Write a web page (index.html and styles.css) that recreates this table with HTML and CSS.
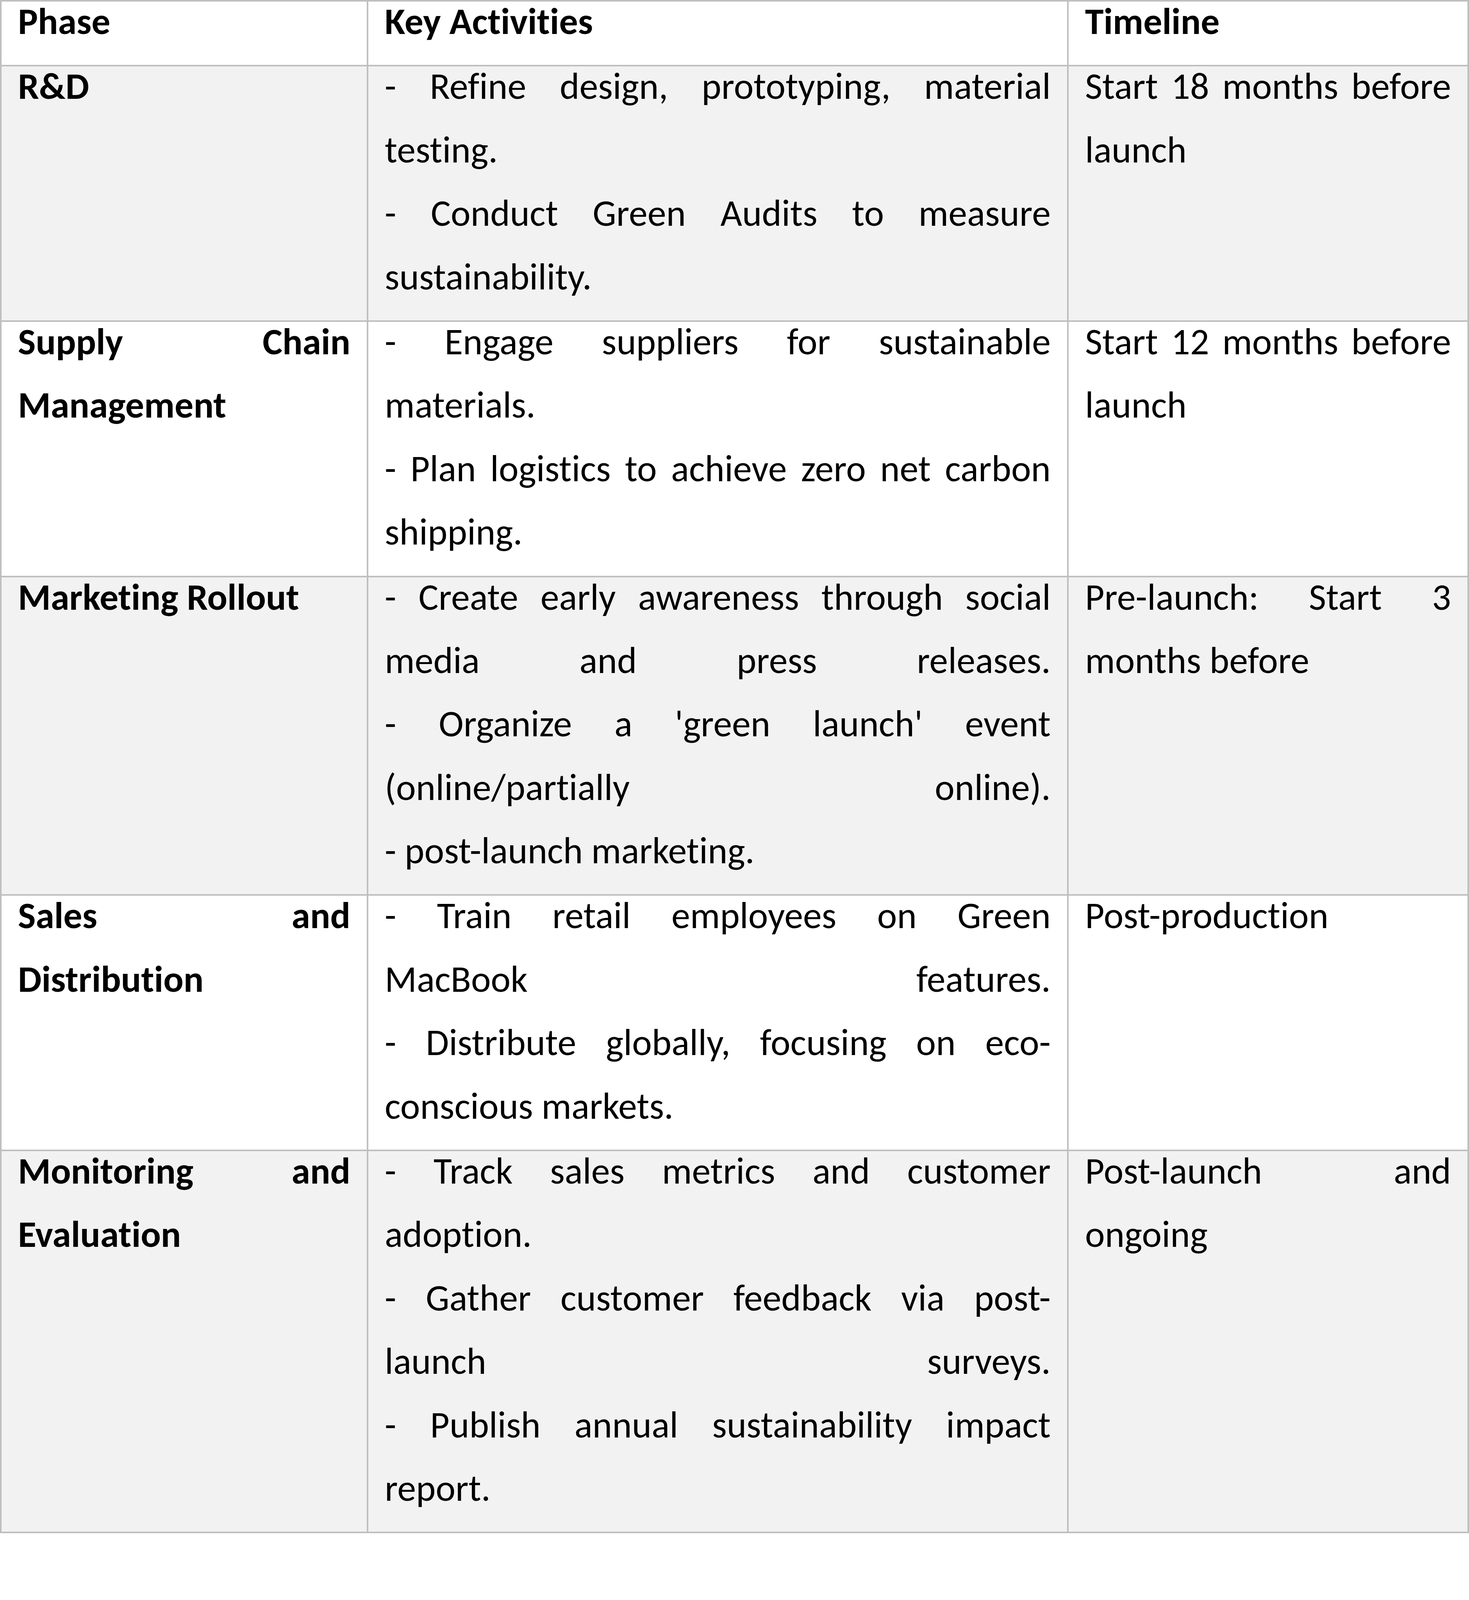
FILE: index.html
```html
<!DOCTYPE html>
<html lang="en">
<head>
<meta charset="utf-8">
<title>Launch Plan</title>
<link rel="stylesheet" href="styles.css">
</head>
<body>
<div class="table">
  <div class="cell hd"><div class="ln">Phase</div></div>
  <div class="cell hd"><div class="ln">Key Activities</div></div>
  <div class="cell hd"><div class="ln">Timeline</div></div>

  <div class="cell alt ph"><div class="ln">R&amp;D</div></div>
  <div class="cell alt">
    <div class="ln j">- Refine design, prototyping, material</div>
    <div class="ln">testing.</div>
    <div class="ln j">- Conduct Green Audits to measure</div>
    <div class="ln">sustainability.</div>
  </div>
  <div class="cell alt">
    <div class="ln j">Start 18 months before</div>
    <div class="ln">launch</div>
  </div>

  <div class="cell ph">
    <div class="ln j">Supply Chain</div>
    <div class="ln">Management</div>
  </div>
  <div class="cell">
    <div class="ln j">- Engage suppliers for sustainable</div>
    <div class="ln">materials.</div>
    <div class="ln j">- Plan logistics to achieve zero net carbon</div>
    <div class="ln">shipping.</div>
  </div>
  <div class="cell">
    <div class="ln j">Start 12 months before</div>
    <div class="ln">launch</div>
  </div>

  <div class="cell alt ph"><div class="ln">Marketing Rollout</div></div>
  <div class="cell alt">
    <div class="ln j">- Create early awareness through social</div>
    <div class="ln j">media and press releases.</div>
    <div class="ln j">- Organize a 'green launch' event</div>
    <div class="ln j">(online/partially online).</div>
    <div class="ln">- post-launch marketing.</div>
  </div>
  <div class="cell alt">
    <div class="ln j">Pre-launch: Start 3</div>
    <div class="ln">months before</div>
  </div>

  <div class="cell ph">
    <div class="ln j">Sales and</div>
    <div class="ln">Distribution</div>
  </div>
  <div class="cell">
    <div class="ln j">- Train retail employees on Green</div>
    <div class="ln j">MacBook features.</div>
    <div class="ln j">- Distribute globally, focusing on eco-</div>
    <div class="ln">conscious markets.</div>
  </div>
  <div class="cell">
    <div class="ln">Post-production</div>
  </div>

  <div class="cell alt ph">
    <div class="ln j">Monitoring and</div>
    <div class="ln">Evaluation</div>
  </div>
  <div class="cell alt">
    <div class="ln j">- Track sales metrics and customer</div>
    <div class="ln">adoption.</div>
    <div class="ln j">- Gather customer feedback via post-</div>
    <div class="ln j">launch surveys.</div>
    <div class="ln j">- Publish annual sustainability impact</div>
    <div class="ln">report.</div>
  </div>
  <div class="cell alt">
    <div class="ln j">Post-launch and</div>
    <div class="ln">ongoing</div>
  </div>
</div>
</body>
</html>
```

FILE: styles.css
```css
html, body {
  margin: 0;
  padding: 0;
  background: #ffffff;
}

body {
  font-family: Carlito, Lato, "Liberation Sans", sans-serif;
  font-size: 96px;
  font-variant-ligatures: none;
  color: #000000;
}

.table {
  display: grid;
  grid-template-columns: 935px 1789px 1021px;
  gap: 4px;
  padding: 4px;
  width: 3761px;
  box-sizing: border-box;
  background: #bfbfbf;
}

.cell {
  background: #ffffff;
  padding: 0 42px;
}

.cell.alt {
  background: #f2f2f2;
}

.hd,
.ph {
  font-weight: 700;
}

.ln {
  height: 162.4px;
  line-height: 102px;
  white-space: nowrap;
  text-align: left;
}

.ln.j {
  text-align: justify;
  text-align-last: justify;
}
```
